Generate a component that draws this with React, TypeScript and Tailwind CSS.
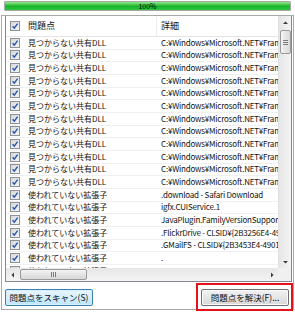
import React from 'react'

const dllPath = 'C:¥Windows¥Microsoft.NET¥Framework¥v2.0.50727¥System.dll'

const rows: { name: string; detail: string }[] = [
  ...Array.from({ length: 12 }, () => ({ name: '見つからない共有DLL', detail: dllPath })),
  { name: '使われていない拡張子', detail: '.download - Safari Download' },
  { name: '使われていない拡張子', detail: 'igfx.CUIService.1' },
  { name: '使われていない拡張子', detail: 'JavaPlugin.FamilyVersionSupport' },
  { name: '使われていない拡張子', detail: '.FlickrDrive - CLSID¥{2B3256E4-49AA-11D3}' },
  { name: '使われていない拡張子', detail: '.GMailFS - CLSID¥{2B3453E4-4901-11D3}' },
  { name: '使われていない拡張子', detail: '.' },
  { name: '使われていない拡張子', detail: '.' },
]

function CheckBox() {
  return (
    <svg width="10" height="10" viewBox="0 0 10 10" className="shrink-0">
      <defs>
        <linearGradient id="cbg" x1="0" y1="0" x2="1" y2="1">
          <stop offset="0" stopColor="#d4d6da" />
          <stop offset="1" stopColor="#f6f7f8" />
        </linearGradient>
      </defs>
      <rect x="0.5" y="0.5" width="9" height="9" fill="url(#cbg)" stroke="#8e9094" />
      <path d="M2.6 5.2 L4.3 7.1 L7.6 2.6" fill="none" stroke="#2455a8" strokeWidth="1.4" />
    </svg>
  )
}

function Arrow({ dir }: { dir: 'up' | 'down' | 'left' | 'right' }) {
  const d = {
    up: 'M1 4 L3.5 1.5 L6 4 Z',
    down: 'M1 2 L3.5 4.5 L6 2 Z',
    left: 'M4 0.5 L1.5 3 L4 5.5 Z',
    right: 'M2 0.5 L4.5 3 L2 5.5 Z',
  }[dir]
  return (
    <svg width="7" height="6" viewBox="0 0 7 6">
      <path d={d} fill="#3a3a3a" />
    </svg>
  )
}

export default function App() {
  return (
    <div className="w-[295px] h-[312px] bg-white relative overflow-hidden font-['Noto_Sans_CJK_JP','Noto_Sans',sans-serif] text-[#111]">
      {/* progress */}
      <div className="mx-[4px] mt-[1px] h-[10px] border border-[#a8a8a8] rounded-[1px] bg-gradient-to-b from-[#8ee88e] via-[#12b52a] to-[#2bc63e] flex items-center justify-center">
        <span className="text-[7px] leading-none text-black">100%</span>
      </div>

      {/* panel */}
      <div className="mt-[4px] ml-[1px] w-[293px] h-[295px] border border-[#a9a9a9] flex flex-col">
        <div className="ml-[3px] w-[287px] h-[266px] border-l border-r border-b border-[#828790] flex flex-col">
          <div className="flex flex-1 min-h-0">
            {/* list content */}
            <div className="flex-1 min-w-0 overflow-hidden flex flex-col">
              <div className="h-[21px] shrink-0 flex items-center border-b border-[#e5e5e5] text-[9px] whitespace-nowrap">
                <div className="w-[18px] shrink-0 pl-[4px] flex items-center">
                  <CheckBox />
                </div>
                <div className="w-[133px] shrink-0 pl-[4px] border-r border-[#ececec] h-full flex items-center">問題点</div>
                <div className="pl-[4px] shrink-0">詳細</div>
              </div>
              {rows.map((r, i) => (
                <div key={i} className="h-[12.67px] shrink-0 flex items-center border-b border-[#f0f0f0] text-[8px] whitespace-nowrap">
                  <div className="w-[18px] shrink-0 pl-[4px] flex items-center">
                    <CheckBox />
                  </div>
                  <div className="w-[133px] shrink-0 pl-[4px] overflow-hidden">{r.name}</div>
                  <div className="pl-[4px] shrink-0 tracking-[-0.2px]">{r.detail}</div>
                </div>
              ))}
            </div>
            {/* vertical scrollbar */}
            <div className="w-[13px] shrink-0 bg-gradient-to-r from-[#e6e6e6] to-[#f4f4f4] border-l border-[#e0e0e0] flex flex-col items-center">
              <div className="h-[14px] w-full flex items-center justify-center">
                <Arrow dir="up" />
              </div>
              <div className="w-[11px] h-[24px] rounded-[2px] border border-[#9a9a9a] bg-gradient-to-r from-[#f3f3f3] to-[#d8d8d8] flex flex-col items-center justify-center gap-[1px]">
                <div className="w-[5px] h-px bg-[#7c7c7c]" />
                <div className="w-[5px] h-px bg-[#7c7c7c]" />
                <div className="w-[5px] h-px bg-[#7c7c7c]" />
              </div>
              <div className="flex-1" />
              <div className="h-[13px] w-full flex items-center justify-center">
                <Arrow dir="down" />
              </div>
            </div>
          </div>
          {/* horizontal scrollbar */}
          <div className="h-[13px] shrink-0 flex">
            <div className="flex-1 bg-gradient-to-b from-[#e6e6e6] to-[#f4f4f4] flex items-center">
              <div className="w-[14px] h-full flex items-center justify-center">
                <Arrow dir="left" />
              </div>
              <div className="w-[67px] h-[11px] rounded-[2px] border border-[#9a9a9a] bg-gradient-to-b from-[#f3f3f3] to-[#d8d8d8] flex items-center justify-center gap-[1px]">
                <div className="w-px h-[5px] bg-[#7c7c7c]" />
                <div className="w-px h-[5px] bg-[#7c7c7c]" />
                <div className="w-px h-[5px] bg-[#7c7c7c]" />
              </div>
              <div className="flex-1" />
              <div className="w-[12px] h-full flex items-center justify-center">
                <Arrow dir="right" />
              </div>
            </div>
            <div className="w-[13px] bg-[#f0f0f0]" />
          </div>
        </div>

        {/* buttons */}
        <div className="flex justify-between items-center mt-[7px] ml-[3px] mr-[4px]">
          <button className="w-[88px] h-[17px] rounded-[2px] border border-[#3c7fb1] bg-gradient-to-b from-[#eaf6fd] to-[#bee6fd] text-[8.5px] leading-none text-[#111] shadow-[inset_0_0_0_1px_#d6efff]">
            問題点をスキャン(S)
          </button>
          <button className="w-[88px] h-[17px] rounded-[2px] border border-[#707070] bg-gradient-to-b from-[#f2f2f2] to-[#d9d9d9] text-[8.5px] leading-none text-[#111] shadow-[inset_0_0_0_1px_#fbfbfb]">
            問題点を解決(F)...
          </button>
        </div>
      </div>

      {/* red annotation frame */}
      <div className="absolute left-[196px] top-[283px] w-[97px] h-[28px] border-2 border-[#e5121c]" />
    </div>
  )
}
